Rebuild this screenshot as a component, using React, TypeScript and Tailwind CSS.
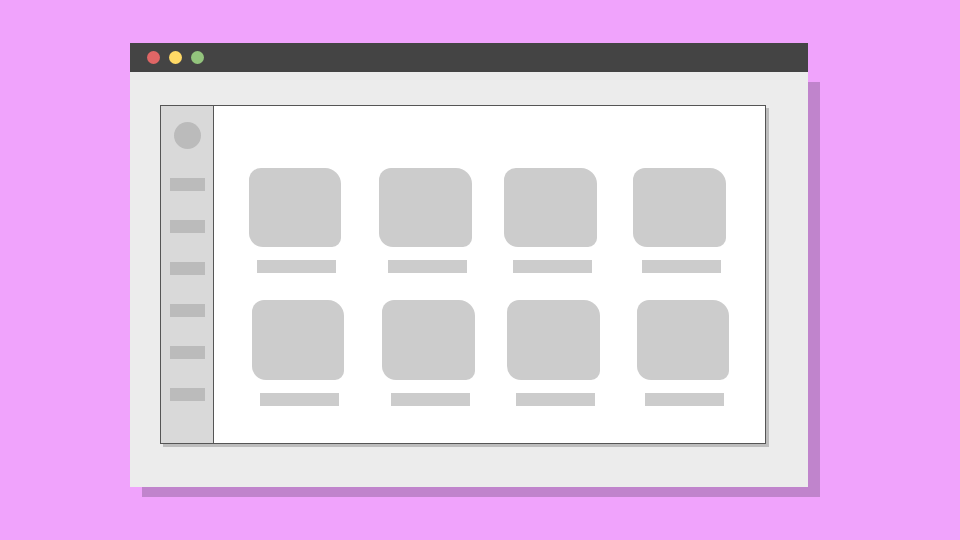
import React from "react";

const row1 = [
  { item: "ml-[35px] w-[92px]", label: "ml-[8px]" },
  { item: "ml-[38px] w-[93px]", label: "ml-[9px]" },
  { item: "ml-[32px] w-[93px]", label: "ml-[9px]" },
  { item: "ml-[36px] w-[93px]", label: "ml-[9px]" },
];
const row2 = [
  { item: "ml-[38px] w-[92px]", label: "ml-[8px]" },
  { item: "ml-[38px] w-[93px]", label: "ml-[9px]" },
  { item: "ml-[32px] w-[93px]", label: "ml-[9px]" },
  { item: "ml-[37px] w-[92px]", label: "ml-[8px]" },
];

function Tile({ item, label, h }: { item: string; label: string; h: string }) {
  return (
    <div className={`flex flex-col ${item}`}>
      <div className={`${h} w-full bg-[#cccccc] rounded-tl-[12px] rounded-tr-[16px] rounded-bl-[14px] rounded-br-[9px]`} />
      <div className={`mt-[13px] h-[13px] w-[79px] bg-[#cccccc] ${label}`} />
    </div>
  );
}

export default function App() {
  return (
    <div className="w-[960px] h-[540px] bg-[#f0a3fc] pt-[43px] pl-[130px] overflow-hidden">
      <div className="w-[678px] flex flex-col">
        <div className="h-[29px] bg-[#444444] flex items-center gap-[9px] pl-[17px]">
          <div className="w-[13px] h-[13px] rounded-full bg-[#e06666]" />
          <div className="w-[13px] h-[13px] rounded-full bg-[#ffd966]" />
          <div className="w-[13px] h-[13px] rounded-full bg-[#93c47d]" />
        </div>
        <div className="h-[415px] bg-[#ececec] shadow-[12px_10px_0_0_#c084cc] pt-[33px] pl-[30px]">
          <div className="w-[606px] h-[339px] border border-[#555555] bg-white shadow-[3px_3px_0_0_#bdbdbd] flex">
            <div className="w-[53px] h-full bg-[#d9d9d9] border-r border-[#555555] flex flex-col items-center pt-[16px]">
              <div className="w-[27px] h-[27px] rounded-full bg-[#bbbbbb]" />
              <div className="mt-[29px] flex flex-col gap-[29px]">
                {[0, 1, 2, 3, 4, 5].map((i) => (
                  <div key={i} className="w-[35px] h-[13px] bg-[#bbbbbb]" />
                ))}
              </div>
            </div>
            <div className="flex-1 flex flex-col pt-[62px]">
              <div className="flex">
                {row1.map((t, i) => (
                  <Tile key={i} item={t.item} label={t.label} h="h-[79px]" />
                ))}
              </div>
              <div className="flex mt-[27px]">
                {row2.map((t, i) => (
                  <Tile key={i} item={t.item} label={t.label} h="h-[80px]" />
                ))}
              </div>
            </div>
          </div>
        </div>
      </div>
    </div>
  );
}
